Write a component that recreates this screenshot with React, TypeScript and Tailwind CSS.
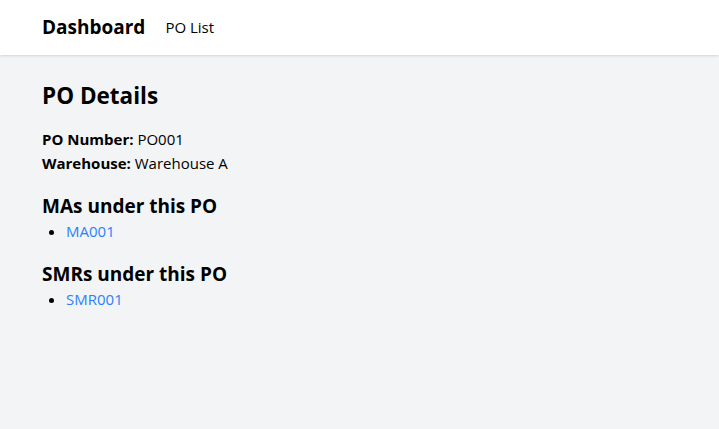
export default function App() {
  return (
    <div className="min-h-screen bg-gray-100 font-['Open_Sans','Noto_Sans',sans-serif] text-black">
      {/* Top nav */}
      <nav className="flex h-[55px] items-center gap-[20px] bg-white px-[42px] shadow">
        <span className="text-[19px] font-bold">Dashboard</span>
        <a className="text-[15px]">PO List</a>
      </nav>

      <main className="px-[42px] pt-[26px]">
        <h1 className="text-[22.5px] font-bold leading-[30px]">PO Details</h1>

        <div className="mt-[16px] text-[15px] leading-[24px]">
          <p>
            <strong>PO Number:</strong> PO001
          </p>
          <p>
            <strong>Warehouse:</strong> Warehouse A
          </p>
        </div>

        <h2 className="mt-[18px] text-[19px] font-bold leading-[26px]">MAs under this PO</h2>
        <ul className="list-disc pl-[24px] text-[15px] leading-[24px]">
          <li>
            <a className="text-blue-500">MA001</a>
          </li>
        </ul>

        <h2 className="mt-[18px] text-[19px] font-bold leading-[26px]">SMRs under this PO</h2>
        <ul className="list-disc pl-[24px] text-[15px] leading-[24px]">
          <li>
            <a className="text-blue-500">SMR001</a>
          </li>
        </ul>
      </main>
    </div>
  );
}
